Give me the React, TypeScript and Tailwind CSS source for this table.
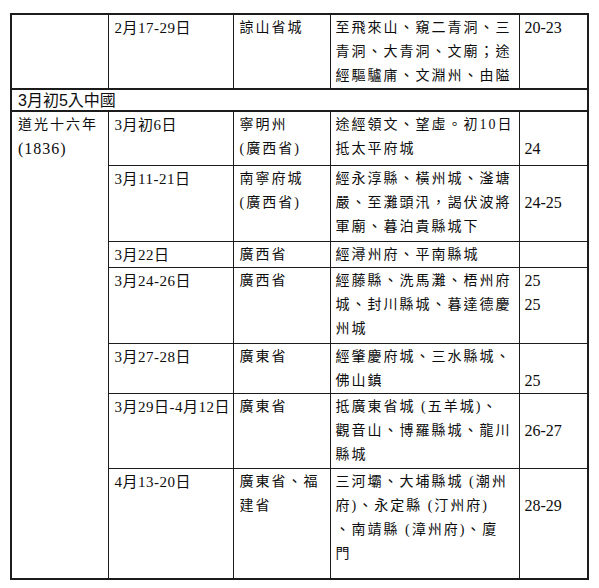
const SERIF = '"Liberation Serif", "Noto Sans CJK TC", serif';
const SANS = '"Liberation Sans", "Noto Sans CJK TC", sans-serif';

type Row = {
  h: string;
  date: string;
  place: string[];
  route: string[];
  page: string[];
};

const ROWS: Row[] = [
  {
    h: 'h-[54px]',
    date: '3月初6日',
    place: ['寧明州', '(廣西省)'],
    route: ['途經領文、望虛。初10日', '抵太平府城'],
    page: ['\u00a0', '24'],
  },
  {
    h: 'h-[76px]',
    date: '3月11-21日',
    place: ['南寧府城', '(廣西省)'],
    route: ['經永淳縣、橫州城、滏塘', '嚴、至灘頭汛，謁伏波將', '軍廟、暮泊貴縣城下'],
    page: ['\u00a0', '24-25'],
  },
  {
    h: 'h-[26px]',
    date: '3月22日',
    place: ['廣西省'],
    route: ['經潯州府、平南縣城'],
    page: [],
  },
  {
    h: 'h-[76px]',
    date: '3月24-26日',
    place: ['廣西省'],
    route: ['經藤縣、洗馬灘、梧州府', '城、封川縣城、暮達德慶', '州城'],
    page: ['25', '25'],
  },
  {
    h: 'h-[50px]',
    date: '3月27-28日',
    place: ['廣東省'],
    route: ['經肇慶府城、三水縣城、', '佛山鎮'],
    page: ['\u00a0', '25'],
  },
  {
    h: 'h-[75px]',
    date: '3月29日-4月12日',
    place: ['廣東省'],
    route: ['抵廣東省城 (五羊城)、', '觀音山、博羅縣城、龍川', '縣城'],
    page: ['\u00a0', '26-27'],
  },
  {
    h: 'h-[111px]',
    date: '4月13-20日',
    place: ['廣東省、福', '建省'],
    route: ['三河壩、大埔縣城 (潮州', '府)、永定縣 (汀州府)', '、南靖縣 (漳州府)、廈', '門'],
    page: ['\u00a0', '28-29'],
  },
];

const cell = 'border border-[#1c1c1c] align-top pt-[1px] leading-[24px] text-[14px] text-[#0d0d0d]';

const Lines = ({ lines }: { lines: string[] }) => (
  <>
    {lines.map((l, i) => (
      <div key={i} className="whitespace-nowrap">{l}</div>
    ))}
  </>
);

export default function App() {
  return (
    <div className="w-[599px] h-[588px] bg-white pt-[13px] pl-[10px]" style={{ fontFamily: SERIF }}>
      <table className="table-fixed border-collapse border-2 border-[#1c1c1c] w-[577px]">
        <colgroup>
          <col className="w-[97px]" />
          <col className="w-[125px]" />
          <col className="w-[97px]" />
          <col className="w-[189px]" />
          <col className="w-[69px]" />
        </colgroup>
        <tbody>
          <tr className="h-[75px]">
            <td className={`${cell} px-[6px]`}></td>
            <td className={`${cell} px-[6px] tracking-[0.5px] text-[15px]`}>2月17-29日</td>
            <td className={`${cell} px-[6px] tracking-[2px]`}>諒山省城</td>
            <td className={`${cell} px-[5px] tracking-[2px]`}>
              <Lines lines={['至飛來山、窺二青洞、三', '青洞、大青洞、文廟；途', '經驅驢庯、文淵州、由隘']} />
            </td>
            <td className={`${cell} px-[5px] text-[16px]`}>20-23</td>
          </tr>
          <tr className="h-[22px]">
            <td colSpan={5} className="border-2 border-[#1c1c1c] px-[6px] leading-[19px] text-[16px] text-[#0d0d0d]" style={{ fontFamily: SANS }}>
              3月初5入中國
            </td>
          </tr>
          {ROWS.map((r, i) => (
            <tr key={i} className={r.h}>
              {i === 0 && (
                <td rowSpan={ROWS.length} className={`${cell} px-[6px] tracking-[2px]`}>
                  <div>道光十六年</div>
                  <div className="text-[16px] tracking-[1px]">(1836)</div>
                </td>
              )}
              <td className={`${cell} px-[6px] tracking-[0.5px] text-[15px] whitespace-nowrap`}>{r.date}</td>
              <td className={`${cell} px-[6px] tracking-[2px]`}>
                <Lines lines={r.place} />
              </td>
              <td className={`${cell} px-[5px] tracking-[2px]`}>
                <Lines lines={r.route} />
              </td>
              <td className={`${cell} px-[5px] text-[16px]`}>
                <Lines lines={r.page} />
              </td>
            </tr>
          ))}
        </tbody>
      </table>
    </div>
  );
}
